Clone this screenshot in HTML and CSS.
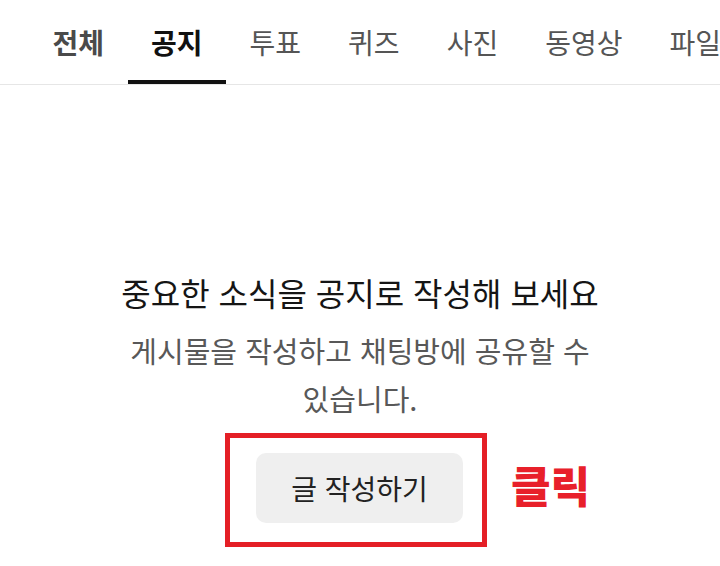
FILE: index.html
```html
<!DOCTYPE html>
<html lang="ko">
<head>
    <meta charset="UTF-8">
    <meta name="viewport" content="width=device-width, initial-scale=1.0">
    <title>공지</title>
    <link rel="stylesheet" href="styles.css">
</head>
<body>

    <!-- Category tabs -->
    <nav class="tabs">
        <a class="tab tab-all">전체</a>
        <a class="tab active">공지</a>
        <a class="tab">투표</a>
        <a class="tab">퀴즈</a>
        <a class="tab">사진</a>
        <a class="tab">동영상</a>
        <a class="tab">파일</a>
    </nav>

    <!-- Empty state -->
    <main class="empty">
        <h2 class="empty-title">중요한 소식을 공지로 작성해 보세요</h2>
        <p class="empty-desc">게시물을 작성하고 채팅방에 공유할 수 있습니다.</p>

        <div class="cta-row">
            <div class="cta-frame">
                <button class="write-btn">글 작성하기</button>
                <span class="click-label">클릭</span>
            </div>
        </div>
    </main>

</body>
</html>
```

FILE: styles.css
```css
html, body {
    overflow: hidden;
}
body {
    margin: 0;
    min-height: 566px;
    background-color: #fff;
    font-family: "Noto Sans CJK KR", "Noto Sans", sans-serif;
}
.tabs {
    display: flex;
    padding-left: 29px;
    border-bottom: 1px solid #e6e6e6;
    white-space: nowrap;
    overflow: hidden;
}
.tab {
    flex-shrink: 0;
    box-sizing: border-box;
    height: 84px;
    padding: 4px 23.5px 0;
    display: flex;
    align-items: center;
    font-size: 28px;
    color: #555;
    border-bottom: 4px solid transparent;
}
.tab-all {
    font-weight: 700;
    color: #4a4a4a;
}
.tab.active {
    font-weight: 700;
    color: #111;
    border-bottom-color: #111;
}
.empty {
    text-align: center;
    padding-top: 187px;
}
.empty-title {
    margin: 0;
    font-size: 32px;
    font-weight: 400;
    color: #151515;
    line-height: 40px;
}
.empty-desc {
    margin: 14px auto 0;
    max-width: 500px;
    font-size: 29px;
    color: #585858;
    line-height: 48px;
    word-break: keep-all;
}
.cta-row {
    display: flex;
    justify-content: center;
    margin-top: 11px;
}
.cta-frame {
    position: relative;
    display: flex;
    margin-right: 8px;
    padding: 15px 19px 19px 26px;
    border: 5px solid #e41f26;
}
.write-btn {
    width: 207px;
    height: 70px;
    border: none;
    border-radius: 10px;
    background-color: #efefef;
    font-family: inherit;
    font-size: 28px;
    color: #222;
    cursor: pointer;
}
.click-label {
    position: absolute;
    top: calc(50% - 6px);
    left: calc(100% + 29px);
    transform: translateY(-50%);
    font-size: 43px;
    font-weight: 900;
    color: #e8202a;
    white-space: nowrap;
}
```
